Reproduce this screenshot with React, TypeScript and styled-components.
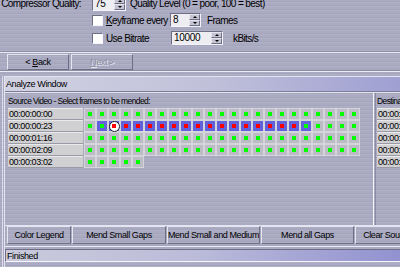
import React from 'react';
import styled, { createGlobalStyle, css } from 'styled-components';

const GlobalStyle = createGlobalStyle`
  html, body {
    margin: 0;
    padding: 0;
    background: #aaaac2;
  }
  body {
    font-family: "Liberation Sans", Arial, sans-serif;
    font-size: 9px;
    letter-spacing: -0.4px;
    color: #000;
  }
`;

const brushed = css`
  background-color: #aaaac2;
  background-image: repeating-linear-gradient(
    0deg,
    rgba(255, 255, 255, 0.07) 0 1px,
    rgba(0, 0, 0, 0.03) 1px 2px,
    transparent 2px 4px
  );
`;

const raised = css`
  border-top: 1px solid #e6e6f0;
  border-left: 1px solid #e6e6f0;
  border-right: 1px solid #6e6e84;
  border-bottom: 1px solid #6e6e84;
`;

const sunken = css`
  border-top: 1px solid #6e6e84;
  border-left: 1px solid #6e6e84;
  border-right: 1px solid #f4f4fa;
  border-bottom: 1px solid #f4f4fa;
`;

const Window = styled.div`
  width: 400px;
  height: 267px;
  overflow: hidden;
  display: flex;
  flex-direction: column;
  ${brushed}
`;

/* ---------- compressor options ---------- */

const Options = styled.div`
  margin-top: -3px;
  height: 54px;
  display: flex;
  flex-direction: column;
  flex-shrink: 0;
  font-size: 10px;
  letter-spacing: -0.6px;
`;

const OptionRow = styled.div<{ $h: number; $top: number }>`
  display: flex;
  align-items: center;
  height: ${(p) => p.$h}px;
  margin-top: ${(p) => p.$top}px;
  padding-left: 92px;
  white-space: nowrap;
`;

const FirstRow = styled.div`
  display: flex;
  align-items: center;
  height: 13px;
  white-space: nowrap;
`;

const RowLabel = styled.div`
  width: 92px;
  padding-right: 11px;
  box-sizing: border-box;
  display: flex;
  justify-content: flex-end;
`;

const Text = styled.span<{ $ml?: number; $w?: number }>`
  margin-left: ${(p) => p.$ml ?? 0}px;
  width: ${(p) => (p.$w ? `${p.$w}px` : 'auto')};
  flex-shrink: 0;
`;

const Check = styled.span`
  width: 11px;
  height: 11px;
  box-sizing: border-box;
  background: #fff;
  ${sunken}
  margin-right: 3px;
  flex-shrink: 0;
`;

const SpinWrap = styled.div<{ $w: number; $h: number }>`
  width: ${(p) => p.$w}px;
  height: ${(p) => p.$h}px;
  box-sizing: border-box;
  display: flex;
  ${sunken}
  background: #eeeef2;
  flex-shrink: 0;
`;

const SpinValue = styled.div`
  flex: 1;
  padding-left: 2px;
  display: flex;
  align-items: center;
  line-height: 1;
  letter-spacing: -0.3px;
`;

const SpinButtons = styled.div`
  width: 11px;
  display: flex;
  flex-direction: column;
`;

const SpinBtn = styled.div<{ $down?: boolean }>`
  flex: 1;
  box-sizing: border-box;
  background: #c4c4d2;
  ${raised}
  display: flex;
  align-items: center;
  justify-content: center;
  &::after {
    content: '';
    border-left: 2px solid transparent;
    border-right: 2px solid transparent;
    ${(p) =>
      p.$down ? 'border-top: 2px solid #000;' : 'border-bottom: 2px solid #000;'}
  }
`;

const SpinBox: React.FC<{ value: string; w: number; h: number }> = ({ value, w, h }) => (
  <SpinWrap $w={w} $h={h}>
    <SpinValue>{value}</SpinValue>
    <SpinButtons>
      <SpinBtn />
      <SpinBtn $down />
    </SpinButtons>
  </SpinWrap>
);

const Groove = styled.div`
  height: 0;
  border-top: 1px solid #8c8ca4;
  border-bottom: 1px solid #ececf6;
  flex-shrink: 0;
`;

/* ---------- wizard buttons ---------- */

const NavRow = styled.div`
  display: flex;
  gap: 2px;
  padding-left: 7px;
  margin-top: 1px;
  height: 16px;
  flex-shrink: 0;
`;

const Button = styled.div<{ $w: number; $disabled?: boolean }>`
  width: ${(p) => p.$w}px;
  box-sizing: border-box;
  ${raised}
  ${brushed}
  display: flex;
  align-items: center;
  justify-content: center;
  white-space: nowrap;
  overflow: hidden;
  flex-shrink: 0;
  color: ${(p) => (p.$disabled ? '#9090a4' : '#000')};
  text-shadow: ${(p) => (p.$disabled ? '1px 1px 0 #e8e8f0' : 'none')};
`;

/* ---------- analyze window ---------- */

const Lower = styled.div`
  flex: 1;
  display: flex;
  margin-top: 4px;
  padding-left: 2px;
`;

const OuterEdge = styled.div`
  flex: 1;
  display: flex;
  border-left: 1px solid #dcdcea;
  padding-left: 1px;
`;

const Panel = styled.div`
  flex: 1;
  display: flex;
  flex-direction: column;
  border-left: 1px solid #e4e4f0;
  border-top: 1px solid #e4e4f0;
  min-width: 0;
`;

const TitleBar = styled.div`
  height: 14px;
  display: flex;
  align-items: center;
  padding-left: 1px;
  background: linear-gradient(90deg, #d2d2e2 0%, #c0c0da 50%, #9c9cd2 100%);
  border-bottom: 1px solid #7c7c96;
  flex-shrink: 0;
`;

const Content = styled.div`
  height: 132px;
  display: flex;
  flex-shrink: 0;
  border-top: 1px solid #e4e4f0;
`;

const SourcePane = styled.div`
  width: 368px;
  padding-left: 3px;
  box-sizing: border-box;
  flex-shrink: 0;
`;

const Caption = styled.div`
  height: 15px;
  display: flex;
  align-items: flex-end;
  padding-bottom: 2px;
  box-sizing: border-box;
  white-space: nowrap;
  font-size: 8.5px;
  letter-spacing: -0.6px;
`;

const Split = styled.div`
  width: 1px;
  border-left: 1px solid #f4f4fa;
  border-right: 1px solid #8a8aa2;
  flex-shrink: 0;
`;

const DestPane = styled.div`
  flex: 1;
  padding-left: 1px;
  overflow: hidden;
`;

const GridRow = styled.div`
  display: flex;
  height: 12px;
`;

const TimeCell = styled.div<{ $w: number }>`
  width: ${(p) => p.$w}px;
  height: 12px;
  box-sizing: border-box;
  background: #d0d0d2;
  border-top: 1px solid #eaeaec;
  border-bottom: 1px solid #9a9aa6;
  margin-right: 1px;
  display: flex;
  align-items: center;
  padding-left: 1px;
  white-space: nowrap;
  overflow: hidden;
  flex-shrink: 0;
`;

type Kind = 'g' | 'G' | 'R' | 'C';

const Cell = styled.div<{ $sel: boolean }>`
  width: 12px;
  height: 12px;
  box-sizing: border-box;
  border: 1px solid #d4d4da;
  background: ${(p) => (p.$sel ? '#6262dc' : '#bcbcc4')};
  display: flex;
  align-items: center;
  justify-content: center;
  flex-shrink: 0;
  position: relative;
`;

const Dot = styled.span<{ $c: string }>`
  width: 4px;
  height: 4px;
  background: ${(p) => p.$c};
`;

const Cursor = styled.span`
  width: 11px;
  height: 11px;
  box-sizing: border-box;
  border-radius: 50%;
  background: #fff;
  border: 1px solid #202030;
  display: flex;
  align-items: center;
  justify-content: center;
  position: absolute;
  left: -0.5px;
  top: -0.5px;
`;

const FrameCell: React.FC<{ kind: Kind }> = ({ kind }) => {
  if (kind === 'C') {
    return (
      <Cell $sel>
        <Cursor>
          <Dot $c="#ff0000" />
        </Cursor>
      </Cell>
    );
  }
  return (
    <Cell $sel={kind !== 'g'}>
      <Dot $c={kind === 'R' ? '#ff0000' : '#00ff00'} />
    </Cell>
  );
};

const ButtonBar = styled.div`
  display: flex;
  gap: 1px;
  padding-left: 2px;
  height: 18px;
  flex-shrink: 0;
  border-top: 1px solid #e4e4f0;
`;

const StatusBar = styled.div`
  margin-top: 2px;
  height: 13px;
  box-sizing: border-box;
  ${sunken}
  background: linear-gradient(90deg, #cacadc 0%, #bcbcda 45%, #8e8ed0 100%);
  display: flex;
  align-items: center;
  padding-left: 1px;
  flex-shrink: 0;
`;

const BottomGroove = styled.div`
  margin-top: 2px;
  border-top: 1px solid #ececf6;
  flex-shrink: 0;
`;

const U = styled.span`
  text-decoration: underline;
`;

const full = (n: number): Kind[] => Array.from({ length: n }, () => 'g');

const rows: { time: string; cells: Kind[] }[] = [
  { time: '00:00:00:00', cells: full(23) },
  {
    time: '00:00:00:23',
    cells: [
      'g',
      'G',
      'C',
      ...(Array.from({ length: 15 }, () => 'R') as Kind[]),
      'G',
      'g',
      'g',
      'g',
      'g',
    ],
  },
  { time: '00:00:01:16', cells: full(23) },
  { time: '00:00:02:09', cells: full(23) },
  { time: '00:00:03:02', cells: full(5) },
];

const App: React.FC = () => {
  return (
    <>
      <GlobalStyle />
      <Window>
        <Options>
          <FirstRow>
            <RowLabel>Compressor Quality:</RowLabel>
            <SpinBox value="75" w={34} h={14} />
            <Text $ml={4}>Quality Level (0 = poor, 100 = best)</Text>
          </FirstRow>
          <OptionRow $h={14} $top={3}>
            <Check />
            <Text $w={64}>
              <U>K</U>eyframe every
            </Text>
            <SpinBox value="8" w={31} h={14} />
            <Text $ml={6}>Frames</Text>
          </OptionRow>
          <OptionRow $h={14} $top={4}>
            <Check />
            <Text $w={65}>Use Bitrate</Text>
            <SpinBox value="10000" w={52} h={14} />
            <Text $ml={10}>kBits/s</Text>
          </OptionRow>
        </Options>
        <Groove />
        <NavRow>
          <Button $w={62}>
            &lt;&nbsp;<U>B</U>ack
          </Button>
          <Button $w={62} $disabled>
            <U>N</U>ext&nbsp;&gt;
          </Button>
        </NavRow>
        <Groove />
        <Lower>
          <OuterEdge>
            <Panel>
              <TitleBar>Analyze Window</TitleBar>
              <Content>
                <SourcePane>
                  <Caption>Source Video - Select frames to be mended:</Caption>
                  {rows.map((r) => (
                    <GridRow key={r.time}>
                      <TimeCell $w={75}>{r.time}</TimeCell>
                      {r.cells.map((k, i) => (
                        <FrameCell key={i} kind={k} />
                      ))}
                    </GridRow>
                  ))}
                </SourcePane>
                <Split />
                <DestPane>
                  <Caption>Destination</Caption>
                  {rows.map((r) => (
                    <GridRow key={r.time}>
                      <TimeCell $w={40}>{r.time}</TimeCell>
                    </GridRow>
                  ))}
                </DestPane>
              </Content>
              <ButtonBar>
                <Button $w={64}>Color Legend</Button>
                <Button $w={94}>Mend Small Gaps</Button>
                <Button $w={93}>Mend Small and Medium</Button>
                <Button $w={93}>Mend all Gaps</Button>
                <Button $w={64}>Clear Source</Button>
              </ButtonBar>
              <BottomGroove />
              <StatusBar>Finished</StatusBar>
            </Panel>
          </OuterEdge>
        </Lower>
      </Window>
    </>
  );
};

export default App;
